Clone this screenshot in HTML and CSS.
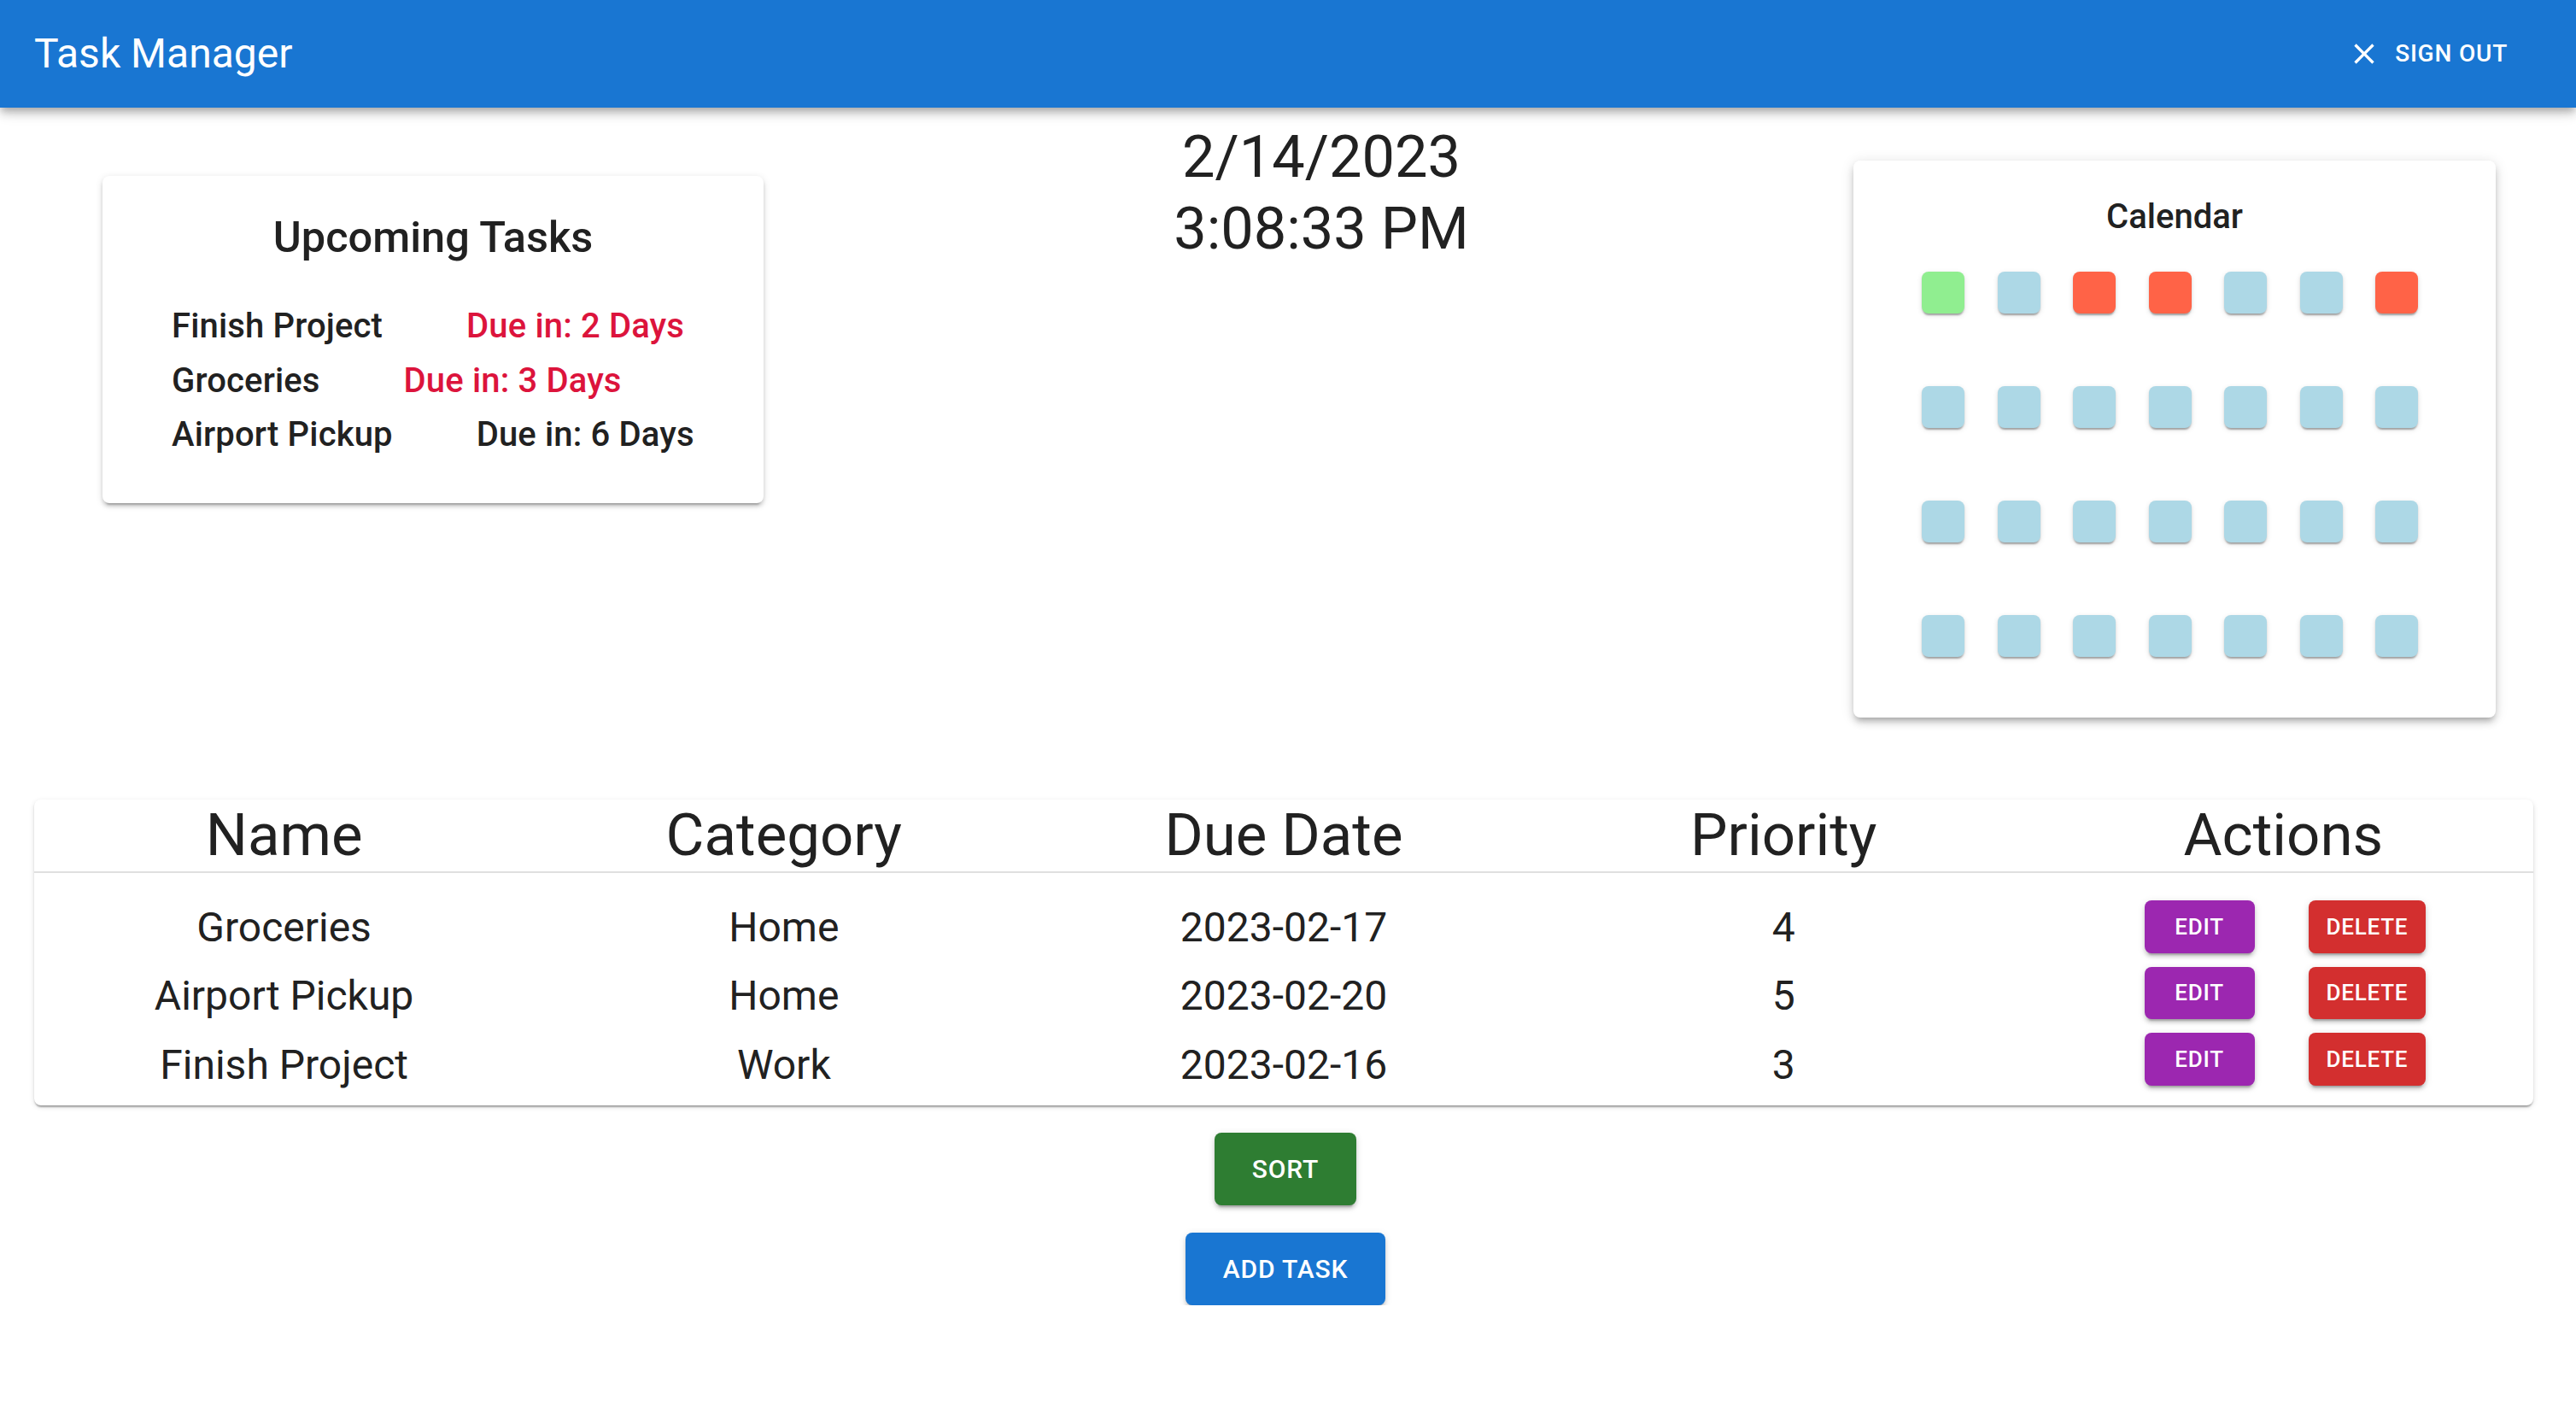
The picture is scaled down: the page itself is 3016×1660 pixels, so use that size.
FILE: index.html
```html
<!DOCTYPE html>
<html lang="en">
<head>
<meta charset="utf-8">
<title>Task Manager</title>
<link rel="stylesheet" href="styles.css">
</head>
<body>
<header class="appbar">
  <div class="appbar-title">Task Manager</div>
  <button class="signout"><svg class="signout-icon" viewBox="0 0 24 24"><path d="M19 6.41 17.59 5 12 10.59 6.41 5 5 6.41 10.59 12 5 17.59 6.41 19 12 13.41 17.59 19 19 17.59 13.41 12z"/></svg><span>Sign Out</span></button>
</header>
<main>
  <section class="top">
    <div class="card upcoming">
      <h2 class="upcoming-title">Upcoming Tasks</h2>
      <div class="up-list">
        <div class="up-row"><span class="up-name">Finish Project</span><span class="up-due urgent">Due in: 2 Days</span></div>
        <div class="up-row"><span class="up-name">Groceries</span><span class="up-due urgent">Due in: 3 Days</span></div>
        <div class="up-row"><span class="up-name">Airport Pickup</span><span class="up-due">Due in: 6 Days</span></div>
      </div>
    </div>
    <div class="clock">
      <div class="clock-line">2/14/2023</div>
      <div class="clock-line">3:08:33 PM</div>
    </div>
    <div class="card calendar">
      <h3 class="calendar-title">Calendar</h3>
      <div class="cal-grid">
        <div class="day today"></div><div class="day"></div><div class="day due"></div><div class="day due"></div><div class="day"></div><div class="day"></div><div class="day due"></div>
        <div class="day"></div><div class="day"></div><div class="day"></div><div class="day"></div><div class="day"></div><div class="day"></div><div class="day"></div>
        <div class="day"></div><div class="day"></div><div class="day"></div><div class="day"></div><div class="day"></div><div class="day"></div><div class="day"></div>
        <div class="day"></div><div class="day"></div><div class="day"></div><div class="day"></div><div class="day"></div><div class="day"></div><div class="day"></div>
      </div>
    </div>
  </section>

  <section class="table-card">
    <div class="thead">
      <div class="th">Name</div>
      <div class="th">Category</div>
      <div class="th">Due Date</div>
      <div class="th">Priority</div>
      <div class="th">Actions</div>
    </div>
    <div class="tbody">
      <div class="tcol">
        <div class="td">Groceries</div>
        <div class="td">Airport Pickup</div>
        <div class="td">Finish Project</div>
      </div>
      <div class="tcol">
        <div class="td">Home</div>
        <div class="td">Home</div>
        <div class="td">Work</div>
      </div>
      <div class="tcol">
        <div class="td">2023-02-17</div>
        <div class="td">2023-02-20</div>
        <div class="td">2023-02-16</div>
      </div>
      <div class="tcol">
        <div class="td">4</div>
        <div class="td">5</div>
        <div class="td">3</div>
      </div>
      <div class="tcol actions">
        <div class="action-row"><button class="sbtn edit">Edit</button><button class="sbtn delete">Delete</button></div>
        <div class="action-row"><button class="sbtn edit">Edit</button><button class="sbtn delete">Delete</button></div>
        <div class="action-row"><button class="sbtn edit">Edit</button><button class="sbtn delete">Delete</button></div>
      </div>
    </div>
  </section>

  <div class="controls">
    <button class="lbtn sort">Sort</button>
    <button class="lbtn add">Add Task</button>
  </div>
</main>
</body>
</html>
```

FILE: styles.css
```css
html, body {
  margin: 0;
  padding: 0;
  background: #ffffff;
}
body {
  font-family: Roboto, "Liberation Sans", Arial, sans-serif;
  color: #212121;
  width: 3016px;
}
button {
  font-family: Roboto, "Liberation Sans", Arial, sans-serif;
  border: none;
  cursor: pointer;
}

/* App bar */
.appbar {
  position: relative;
  z-index: 2;
  height: 126px;
  box-sizing: border-box;
  background: #1976d2;
  color: #fff;
  display: flex;
  align-items: center;
  justify-content: space-between;
  padding: 0 64px 0 40px;
  box-shadow: 0 4px 8px -2px rgba(0,0,0,0.2), 0 8px 10px 0 rgba(0,0,0,0.14), 0 2px 20px 0 rgba(0,0,0,0.12);
}
.appbar-title {
  font-size: 48px;
  font-weight: 400;
  line-height: 64px;
  letter-spacing: 0;
}
.signout {
  background: transparent;
  color: #fff;
  display: flex;
  align-items: center;
  padding: 12px 16px;
  font-size: 28px;
  font-weight: 500;
  letter-spacing: 0.8px;
  text-transform: uppercase;
  line-height: 48px;
  border-radius: 8px;
}
.signout-icon {
  width: 40px;
  height: 40px;
  fill: #fff;
  margin: 0 16px 0 -8px;
}

/* Top section */
.top {
  display: flex;
  align-items: flex-start;
}
.card {
  background: #fff;
  border-radius: 8px;
  box-sizing: border-box;
}
.upcoming {
  margin: 80px 0 0 120px;
  width: 774px;
  height: 383px;
  padding: 40px 0 48px;
  box-shadow: 0 6px 2px -4px rgba(0,0,0,0.2), 0 4px 4px 0 rgba(0,0,0,0.14), 0 2px 10px 0 rgba(0,0,0,0.12);
}
.upcoming-title {
  margin: 0 0 40px;
  text-align: center;
  font-size: 50.5px;
  font-weight: 500;
  line-height: 64px;
}
.up-list {
  padding-left: 81px;
}
.up-row {
  display: flex;
  font-size: 40px;
  font-weight: 500;
  line-height: 63.5px;
  letter-spacing: 0.15px;
}
.up-due {
  margin-left: 98px;
}
.up-due.urgent {
  color: #dc143c;
}

.clock {
  flex: 1;
  margin-top: 16px;
  padding-left: 30px;
  text-align: center;
  font-size: 68.5px;
  line-height: 84px;
  font-weight: 400;
}

.calendar {
  width: 752px;
  height: 652px;
  margin: 62px 94px 0 0;
  padding-top: 34px;
  box-shadow: 0 6px 6px -4px rgba(0,0,0,0.2), 0 6px 8px 0 rgba(0,0,0,0.14), 0 2px 16px 0 rgba(0,0,0,0.12);
}
.calendar-title {
  margin: 0 0 32px;
  text-align: center;
  font-size: 40px;
  font-weight: 500;
  line-height: 64px;
}
.cal-grid {
  display: grid;
  grid-template-columns: repeat(7, 50px);
  column-gap: 38.5px;
  row-gap: 85px;
  padding-left: 80px;
}
.day {
  height: 49px;
  border-radius: 8px;
  background: #add8e6;
  box-shadow: 0 4px 2px -2px rgba(0,0,0,0.2), 0 2px 2px 0 rgba(0,0,0,0.14), 0 2px 6px 0 rgba(0,0,0,0.12);
}
.day.today { background: #90ee90; }
.day.due { background: #ff6347; }

/* Table */
.table-card {
  margin: 96px 0 0 40px;
  width: 2926px;
  background: #fff;
  border-radius: 8px;
  box-shadow: 0 4px 2px -2px rgba(0,0,0,0.2), 0 2px 2px 0 rgba(0,0,0,0.14), 0 2px 6px 0 rgba(0,0,0,0.12);
}
.thead {
  display: grid;
  grid-template-columns: repeat(5, 1fr);
  border-bottom: 2px solid #e0e0e0;
}
.th {
  text-align: center;
  font-size: 69px;
  line-height: 84px;
  font-weight: 400;
}
.tbody {
  display: grid;
  grid-template-columns: repeat(5, 1fr);
  align-items: start;
}
.tcol {
  padding: 23.5px 0 7px;
}
.td {
  text-align: center;
  font-size: 48px;
  line-height: 80.5px;
}
.tcol.actions {
  padding: 32px 0 23px;
  display: flex;
  flex-direction: column;
  gap: 16px;
}
.action-row {
  display: flex;
  justify-content: center;
  gap: 63px;
  padding-left: 4px;
}
.sbtn {
  height: 61.5px;
  min-width: 129px;
  padding: 0 21px;
  border-radius: 8px;
  color: #fff;
  font-size: 26px;
  font-weight: 500;
  letter-spacing: 0.74px;
  text-transform: uppercase;
  box-shadow: 0 6px 2px -4px rgba(0,0,0,0.2), 0 4px 4px 0 rgba(0,0,0,0.14), 0 2px 10px 0 rgba(0,0,0,0.12);
}
.sbtn.edit { background: #9c27b0; }
.sbtn.delete { background: #d32f2f; }

/* Controls */
.controls {
  width: 2926px;
  margin-left: 42px;
  padding-top: 32px;
  display: flex;
  flex-direction: column;
  align-items: center;
  gap: 32px;
}
.lbtn {
  height: 85px;
  padding: 0 44px;
  border-radius: 8px;
  color: #fff;
  font-size: 30px;
  font-weight: 500;
  letter-spacing: 0.86px;
  text-transform: uppercase;
  box-shadow: 0 6px 2px -4px rgba(0,0,0,0.2), 0 4px 4px 0 rgba(0,0,0,0.14), 0 2px 10px 0 rgba(0,0,0,0.12);
}
.lbtn.sort { background: #2e7d32; }
.lbtn.add { background: #1976d2; }
```
